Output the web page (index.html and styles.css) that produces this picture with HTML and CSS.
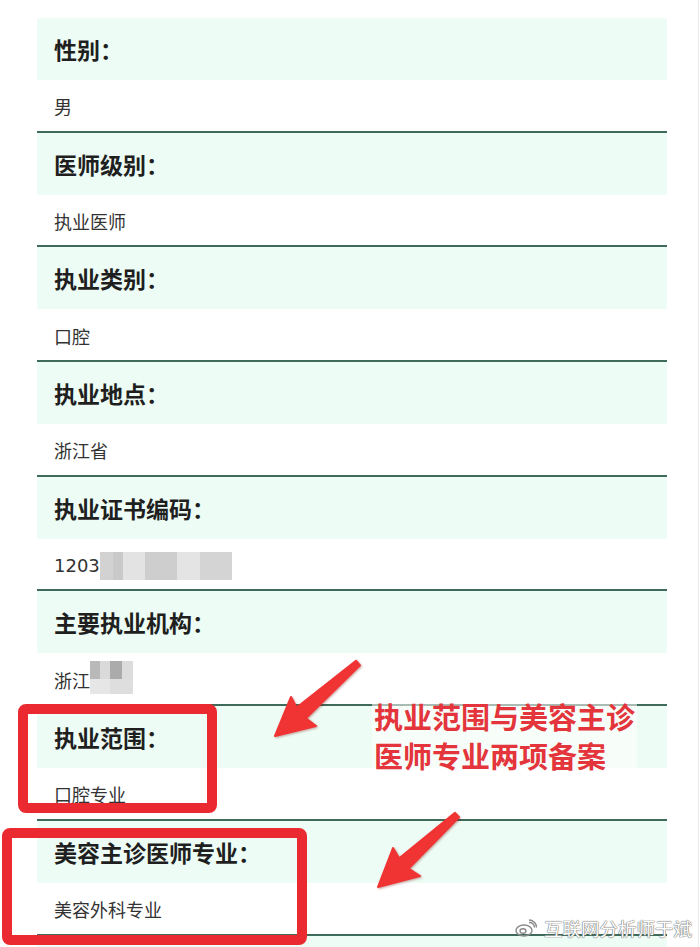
FILE: index.html
```html
<!DOCTYPE html>
<html lang="zh-CN">
<head>
  <meta charset="UTF-8" />
  <meta name="viewport" content="width=device-width, initial-scale=1.0"/>
  <title>医师执业信息</title>
  <link rel="stylesheet" href="styles.css">
</head>
<body>
  <div class="page">
    <div class="list">
      <div class="item">
        <div class="label">性别：</div>
        <div class="value">男</div>
      </div>
      <div class="item">
        <div class="label">医师级别：</div>
        <div class="value">执业医师</div>
      </div>
      <div class="item">
        <div class="label">执业类别：</div>
        <div class="value">口腔</div>
      </div>
      <div class="item">
        <div class="label">执业地点：</div>
        <div class="value">浙江省</div>
      </div>
      <div class="item">
        <div class="label">执业证书编码：</div>
        <div class="value">1203<span class="mosaic mosaic-code"></span></div>
      </div>
      <div class="item">
        <div class="label">主要执业机构：</div>
        <div class="value">浙江<span class="mosaic mosaic-org"></span></div>
      </div>
      <div class="item">
        <div class="label">执业范围：</div>
        <div class="value">口腔专业</div>
      </div>
      <div class="item">
        <div class="label">美容主诊医师专业：</div>
        <div class="value">美容外科专业</div>
      </div>
      <div class="item">
        <div class="label"></div>
      </div>
    </div>

    <!-- annotations drawn over the screenshot -->
    <div class="mark mark-scope"></div>
    <div class="mark mark-beauty"></div>

    <div class="note">执业范围与美容主诊<br>医师专业两项备案</div>

    <svg class="arrows" width="700" height="947" viewBox="0 0 700 947">
      <polygon class="arrow" points="275,736 291,697 296.7,707.6 356,660.7 360,665.3 305.9,718.2 316,726"/>
      <polygon class="arrow" points="378,887 393,848 399.2,858.2 455,812.8 459,817.2 408.6,868.6 420,876"/>
    </svg>

    <div class="watermark">
      <svg class="wm-logo" width="22" height="18" viewBox="0 0 22 18">
        <ellipse cx="9" cy="11.5" rx="8" ry="5.5" />
        <ellipse cx="8" cy="12" rx="3" ry="2.3" />
        <path d="M14 3.5a5 5 0 0 1 5.5 5" />
        <path d="M14 1a7.5 7.5 0 0 1 7.5 7.5" />
      </svg>
      <span>互联网分析师于斌</span>
    </div>
  </div>
</body>
</html>
```

FILE: styles.css
```css
* { box-sizing: border-box; }

body {
  margin: 0;
  background: #fff;
  font-family: "Noto Sans CJK SC", "Noto Sans", sans-serif;
  color: #222;
}

.page {
  position: relative;
  width: 699px;
  height: 947px;
  overflow: hidden;
  border-right: 1px solid #ececec;
}

.list {
  width: 630px;
  margin-left: 37px;
  padding-top: 18px;
}

.label {
  height: 62px;
  padding-left: 17px;
  display: flex;
  align-items: center;
  background-color: #edfcf4;
  font-size: 23px;
  font-weight: bold;
  color: #1f1f1f;
}

.value {
  height: 52.7px;
  padding-left: 17px;
  padding-top: 2px;
  display: flex;
  align-items: center;
  font-family: "DejaVu Sans", "Noto Sans CJK SC", sans-serif;
  font-size: 18px;
  color: #333;
  border-bottom: 2px solid #3f6c5a;
}

.mosaic {
  display: inline-block;
  align-self: stretch;
  margin: 11px 0 9px;
}

.mosaic-code {
  width: 132px;
  background: linear-gradient(to right,
    #d2d2d2 0 13px, #c9c9c9 13px 23px, #e3e3e3 23px 45px,
    #cecece 45px 77px, #e4e4e4 77px 100px, #d4d4d4 100px 132px);
}

.mosaic-org {
  width: 43px;
  margin: 6px 0 10px;
  background:
    linear-gradient(to right,
      #b9b9b9 0 10px, #dadada 10px 20px, #ababab 20px 32px, #dcdcdc 32px 43px)
      top / 100% 55% no-repeat,
    linear-gradient(to right, #e6e6e6 0 20px, #dedede 20px 43px);
}

.mark {
  position: absolute;
  border: 10px solid #ea2a30;
  border-radius: 8px;
}

.mark-scope {
  left: 18px;
  top: 704px;
  width: 199px;
  height: 109px;
}

.mark-beauty {
  left: 2px;
  top: 828px;
  width: 305px;
  height: 117px;
}

.note {
  position: absolute;
  left: 372px;
  top: 697px;
  padding: 0 2px;
  font-size: 29px;
  line-height: 39px;
  font-weight: bold;
  color: #e3353b;
  background: rgba(255, 255, 255, 0.55);
}

.arrows {
  position: absolute;
  left: 0;
  top: 0;
}

.arrow {
  fill: #f03333;
  stroke: #f03333;
  stroke-width: 2;
  stroke-linejoin: round;
  filter: drop-shadow(1px 1px 1px rgba(120, 0, 0, 0.35));
}

.watermark {
  position: absolute;
  left: 515px;
  top: 915px;
  display: flex;
  align-items: center;
  gap: 7px;
  font-size: 18.5px;
  color: #fff;
  text-shadow: 0 0 1px #777, 0 0 1px #777, 0 0 1px #777;
}

.wm-logo {
  fill: none;
  stroke: #8a8a8a;
  stroke-width: 1.4;
}
```
